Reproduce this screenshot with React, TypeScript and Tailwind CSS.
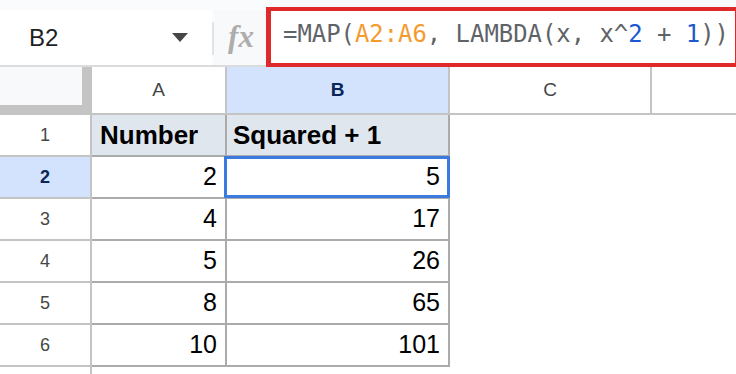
import React from "react";

const rows: { n: number; a: string; b: string }[] = [
  { n: 1, a: "Number", b: "Squared + 1" },
  { n: 2, a: "2", b: "5" },
  { n: 3, a: "4", b: "17" },
  { n: 4, a: "5", b: "26" },
  { n: 5, a: "8", b: "65" },
  { n: 6, a: "10", b: "101" },
];

export default function App() {
  return (
    <div className="w-[736px] h-[374px] overflow-hidden bg-white font-['Liberation_Sans',Arial,sans-serif] text-black">
      {/* top bar */}
      <div className="flex h-[65px] bg-[#f9fbfd] items-start">
        <div className="mt-[10px] h-[55px] w-[212px] bg-white flex items-center">
          <span className="pl-[29px] text-[24px] leading-none text-[#1f1f1f]">B2</span>
          <svg className="ml-auto mr-[24px]" width="16" height="9" viewBox="0 0 16 9">
            <polygon points="0,0 16,0 8,9" fill="#444746" />
          </svg>
        </div>
        <div className="mt-[22px] h-[33px] w-[2px] bg-[#e1e3e6]" />
        <div className="mt-[10px] h-[55px] w-[52px] bg-[#f8f9fa] flex items-center justify-center">
          <span className="font-['Liberation_Serif',serif] italic font-bold text-[31px] leading-none text-[#adadad] -mt-[3px] pl-[2px]">
            fx
          </span>
        </div>
        <div className="relative z-10 mt-[7px] h-[60px] flex-1 bg-white border-[#de2a2b] border-l-[5px] border-t-[4px] border-b-[4px] border-r-[1px] flex items-center pl-[12px] pb-[4px]">
          <span className="font-['DejaVu_Sans_Mono',monospace] text-[23.9px] leading-none whitespace-nowrap text-[#5f6368]">
            =MAP(<span className="text-[#f39b2f]">A2:A6</span>, LAMBDA(x, x^<span className="text-[#1c58d1]">2</span> + <span className="text-[#1c58d1]">1</span>))
          </span>
        </div>
      </div>
      <div className="h-[2px] bg-[#d9dbdd]" />

      {/* column headers */}
      <div className="flex h-[48px] text-[19px] text-[#444746]">
        <div className="w-[92px] bg-[#f8f9fa] border-r-[10px] border-b-[10px] border-[#c4c4c4]" />
        <div className="w-[135px] bg-white border-r-2 border-b-2 border-[#c4c4c4] flex items-center justify-center">A</div>
        <div className="w-[223px] bg-[#d3e3fd] border-r-2 border-b-2 border-[#c4c4c4] flex items-center justify-center font-bold text-[#0b2559]">B</div>
        <div className="w-[202px] bg-white border-r-2 border-b-2 border-[#c4c4c4] flex items-center justify-center">C</div>
        <div className="flex-1 bg-white border-b-2 border-[#c4c4c4]" />
      </div>

      {/* data rows */}
      {rows.map((r) => {
        const header = r.n === 1;
        const sel = r.n === 2;
        return (
          <div key={r.n} className="flex h-[42px]">
            <div
              className={
                sel
                  ? "w-[92px] border-r-2 border-b-2 border-[#c4c4c4] bg-[#d3e3fd] flex items-center justify-center text-[18px] font-bold text-[#0b2559]"
                  : "w-[92px] border-r-2 border-b-2 border-[#c4c4c4] bg-white flex items-center justify-center text-[18px] text-[#444746]"
              }
            >
              {r.n}
            </div>
            <div
              className={
                header
                  ? "w-[135px] border-r-2 border-b-2 border-[#ababab] bg-[#dfe6ee] flex items-center pl-[8px] text-[26px] font-bold"
                  : "w-[135px] border-r-2 border-b-2 border-[#ababab] bg-white flex items-center justify-end pr-[8px] text-[25px]"
              }
            >
              {r.a}
            </div>
            <div
              className={
                header
                  ? "relative w-[223px] border-r-2 border-b-2 border-[#ababab] bg-[#dfe6ee] flex items-center pl-[6px] text-[26px] font-bold"
                  : "relative w-[223px] border-r-2 border-b-2 border-[#ababab] bg-white flex items-center justify-end pr-[8px] text-[25px]"
              }
            >
              {r.b}
              {sel && (
                <div className="absolute -left-[3px] -right-[2px] -top-[1px] -bottom-[1px] border-[3px] border-[#3b7be0]" />
              )}
            </div>
            <div className="w-[202px] bg-white" />
            <div className="flex-1 bg-white" />
          </div>
        );
      })}
      <div className="flex h-[10px]">
        <div className="w-[92px] border-r-2 border-[#c4c4c4] bg-white" />
        <div className="flex-1 bg-white" />
      </div>
    </div>
  );
}
